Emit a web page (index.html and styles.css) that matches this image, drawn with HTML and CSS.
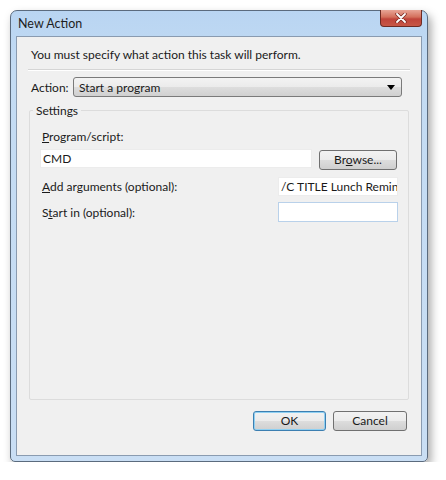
FILE: index.html
```html
<!DOCTYPE html>
<html lang="en">
<head>
    <meta charset="UTF-8">
    <title>New Action</title>
    <link rel="stylesheet" href="styles.css">
</head>
<body>

<div class="window">
    <div class="titlebar">
        <span class="title">New Action</span>
        <span class="close">
            <svg width="12" height="10" viewBox="0 0 12 10">
                <path d="M2 1 L10 9 M10 1 L2 9" stroke="#7a2a22" stroke-width="3.4" stroke-linecap="round"/>
                <path d="M2 1 L10 9 M10 1 L2 9" stroke="#ffffff" stroke-width="1.8" stroke-linecap="round"/>
            </svg>
        </span>
    </div>

    <div class="client">
        <p class="intro">You must specify what action this task will perform.</p>
        <div class="sep"></div>

        <div class="action-row">
            <span class="action-label">Act<u>i</u>on:</span>
            <div class="combo">
                <span>Start a program</span>
                <svg width="8" height="5" viewBox="0 0 8 5"><path d="M0 0 H8 L4 5 Z" fill="#000"/></svg>
            </div>
        </div>

        <fieldset class="settings">
            <legend>Settings</legend>
            <div class="field-label"><u>P</u>rogram/script:</div>
            <div class="program-row">
                <div class="textbox wide">CMD</div>
                <div class="btn browse">Br<u>o</u>wse...</div>
            </div>
            <div class="opt-row first">
                <span class="opt-label"><u>A</u>dd arguments (optional):</span>
                <div class="textbox short">/C TITLE Lunch Reminde</div>
            </div>
            <div class="opt-row">
                <span class="opt-label">S<u>t</u>art in (optional):</span>
                <div class="textbox short focused"></div>
            </div>
        </fieldset>

        <div class="buttons">
            <div class="btn dialog default">OK</div>
            <div class="btn dialog">Cancel</div>
        </div>
    </div>
</div>

</body>
</html>
```

FILE: styles.css
```css
body {
    margin: 0;
    background-color: #ffffff;
    font-family: Lato, "Noto Sans", sans-serif;
    font-size: 12px;
    color: #1a1a1a;
}
.window {
    margin: 10px 0 0 10px;
    width: 406px;
    height: 445px;
    border: 1px solid #5b6b7e;
    border-radius: 7px 7px 5px 5px;
    background: linear-gradient(to bottom, #b9d5f2 0px, #c3dbf3 60px, #c9def4 100%);
    box-shadow: 3px 5px 10px rgba(0,0,0,0.35);
    padding: 0 5px 5px 5px;
    display: flex;
    flex-direction: column;
}
.titlebar {
    height: 25px;
    display: flex;
    align-items: flex-start;
    justify-content: space-between;
}
.title {
    margin-top: 5px;
    margin-left: 2px;
    font-size: 12.5px;
    color: #1e1e1e;
}
.close {
    width: 42px;
    height: 17px;
    margin-top: -1px;
    border: 1px solid #6e2a22;
    border-top: none;
    border-radius: 0 0 4px 4px;
    background: linear-gradient(to bottom, #e8a597 0px, #d4705c 7px, #c0443a 9px, #c85a48 17px);
    display: flex;
    align-items: center;
    justify-content: center;
    box-sizing: border-box;
}
.client {
    flex: 1;
    background-color: #f0f0f0;
    border: 1px solid #8a9bb0;
    display: flex;
    flex-direction: column;
}
.intro {
    margin: 10px 0 0 14px;
    line-height: 15px;
}
.sep {
    height: 1px;
    background-color: #d5d5d5;
    border-bottom: 1px solid #ffffff;
    margin: 7px 11px 0 11px;
}
.action-row {
    display: flex;
    align-items: center;
    margin-top: 6px;
    padding: 0 19px 0 14px;
}
.action-label {
    width: 42px;
}
.combo {
    flex: 1;
    height: 20px;
    box-sizing: border-box;
    border: 1px solid #7a7a7a;
    border-radius: 3px;
    background: linear-gradient(to bottom, #f3f3f3 0%, #ebebeb 50%, #dddddd 51%, #d0d0d0 100%);
    display: flex;
    align-items: center;
    justify-content: space-between;
    padding: 0 6px 0 5px;
}
.settings {
    margin: 7px 12px 0 12px;
    padding: 0 10px 0 10px;
    height: 296px;
    border: 1px solid #dcdcdc;
    border-radius: 2px;
    box-sizing: border-box;
}
.settings legend {
    padding: 0 3px;
    margin-left: -7px;
    line-height: 13px;
}
.field-label {
    margin: 12px 0 0 2px;
    line-height: 15px;
}
.program-row {
    display: flex;
    align-items: flex-start;
    margin-top: 5px;
}
.textbox {
    height: 19px;
    box-sizing: border-box;
    background-color: #ffffff;
    border: 1px solid #ececec;
    padding: 0 2px;
    line-height: 17px;
    white-space: nowrap;
    overflow: hidden;
}
.textbox.wide {
    width: 272px;
}
.textbox.short {
    width: 120px;
    margin-left: auto;
}
.textbox.focused {
    height: 20px;
    border-color: #b9d1ea;
}
.btn {
    box-sizing: border-box;
    height: 20px;
    border: 1px solid #707070;
    border-radius: 3px;
    background: linear-gradient(to bottom, #f2f2f2 0%, #ebebeb 50%, #dddddd 51%, #cfcfcf 100%);
    text-align: center;
    line-height: 18px;
}
.browse {
    width: 78px;
    margin: 1px 1px 0 7px;
}
.opt-row {
    display: flex;
    align-items: center;
    margin-top: 6px;
}
.opt-row.first {
    margin-top: 7px;
}
.opt-label {
    margin-left: 2px;
}
.buttons {
    display: flex;
    justify-content: flex-end;
    gap: 7px;
    margin: 11px 14px 0 0;
}
.dialog {
    width: 74px;
}
.default {
    width: 73px;
    border-color: #3c7fb1;
    box-shadow: inset 0 0 0 1px #8fd0f2;
}
```
